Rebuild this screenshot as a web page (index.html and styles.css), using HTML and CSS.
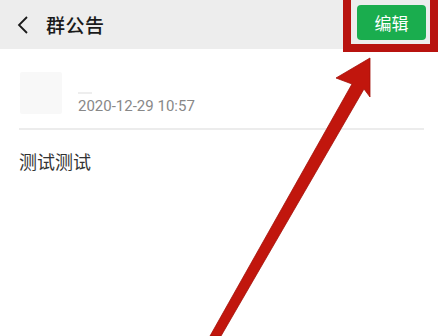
FILE: index.html
```html
<!DOCTYPE html>
<html lang="zh">
<head>
<meta charset="utf-8">
<link rel="stylesheet" href="styles.css">
</head>
<body>
<div class="page">
  <header class="bar">
    <svg class="back" width="14" height="20" viewBox="0 0 14 20"><path d="M11 2 L3 10 L11 18" fill="none" stroke="#1a1a1a" stroke-width="1.8"/></svg>
    <span class="title">群公告</span>
    <span class="grow"></span>
    <button class="edit">编辑</button>
  </header>
  <section class="meta">
    <div class="avatar"></div>
    <div class="info">
      <div class="name"></div>
      <div class="date">2020-12-29 10:57</div>
    </div>
  </section>
  <div class="sep"></div>
  <p class="content">测试测试</p>
  <div class="hl"></div>
  <svg class="arrow" width="438" height="336" viewBox="0 0 438 336">
    <polygon points="210,336 221,336 364,89 370,97 370,58 336,78 352,84" fill="#c1160d" stroke="#a31009" stroke-width="0.8"/>
  </svg>
</div>
</body>
</html>
```
FILE: styles.css
```css
* { box-sizing: border-box; }
html, body { margin: 0; padding: 0; }
body { width: 438px; height: 336px; overflow: hidden; background: #fff; font-family: "Noto Sans CJK SC", Roboto, sans-serif; }
.page { position: relative; width: 438px; height: 336px; }
.bar { height: 49px; background: #ededed; display: flex; align-items: center; padding: 0 12px 0 16px; }
.back { margin-right: 16px; }
.title { font-size: 19px; color: #1a1a1a; font-weight: 500; letter-spacing: 0.5px; }
.grow { flex: 1; }
.edit { width: 69px; height: 35px; border: 0; border-radius: 4px; background: #1aad4e; color: #fff; font-family: inherit; font-size: 17px; padding: 0; margin-top: -4px; }
.meta { display: flex; padding: 23px 20px 0 20px; height: 79px; }
.avatar { width: 42px; height: 42px; background: #f8f8f8; border-radius: 2px; }
.info { margin-left: 16px; display: flex; flex-direction: column; justify-content: flex-end; height: 42px; }
.name { width: 14px; height: 2px; background: #eeeeee; margin-bottom: 4px; }
.date { font-family: Roboto, "Liberation Sans", sans-serif; font-size: 15px; color: #888; line-height: 16px; }
.sep { height: 2px; background: #ececec; margin: 0 14px 0 19px; }
.content { margin: 20px 19px; font-size: 18px; color: #333; line-height: 22px; }
.hl { position: absolute; left: 343px; top: -8px; width: 95px; height: 60px; border: 8px solid #b8130f; }
.arrow { position: absolute; left: 0; top: 0; }
```
